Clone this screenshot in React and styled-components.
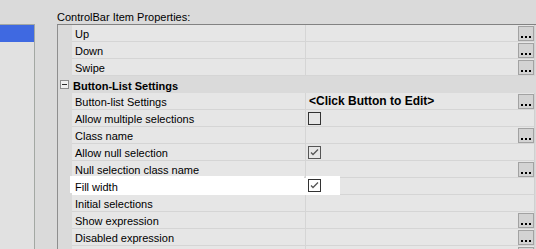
import React from "react";
import styled, { createGlobalStyle } from "styled-components";

const GlobalStyle = createGlobalStyle`
  html, body {
    margin: 0;
    padding: 0;
    background: #dadada;
    overflow: hidden;
  }
  body {
    font-family: "Liberation Sans", Arial, sans-serif;
    font-size: 11px;
    color: #000;
  }
`;

const Page = styled.div`
  display: flex;
  width: 536px;
  height: 249px;
  overflow: hidden;
`;

const SidePanel = styled.div`
  width: 34px;
  margin-top: 24px;
  border-top: 1px solid #a3a8a3;
  border-right: 1px solid #a3a8a3;
  background: #e1e1e1;
  flex-shrink: 0;
`;

const SideSelected = styled.div`
  height: 17px;
  background: #3f69e1;
`;

const Main = styled.div`
  margin-left: 22px;
  display: flex;
  flex-direction: column;
  flex: 1;
`;

const Title = styled.div`
  height: 25px;
  box-sizing: border-box;
  padding-top: 11px;
  line-height: 13px;
  white-space: nowrap;
`;

const Grid = styled.div`
  border-top: 1px solid #828282;
  border-left: 1px solid #8e8e8e;
  display: flex;
  flex-direction: column;
`;

const Row = styled.div`
  display: flex;
  height: 17px;
`;

const MarginCell = styled.div`
  width: 14px;
  flex-shrink: 0;
`;

const NameCell = styled.div`
  width: 230px;
  padding-left: 3px;
  flex-shrink: 0;
  height: 16px;
  line-height: 18px;
  background: ${(p) => (p.$active ? "#ffffff" : "#e6e6e6")};
  border-bottom: 1px solid ${(p) => (p.$active ? "#ffffff" : "#d5d5d5")};
  border-right: 1px solid ${(p) => (p.$active ? "#ffffff" : "#d5d5d5")};
  box-shadow: ${(p) => (p.$active ? "-2px -2px 0 #ffffff" : "none")};
  white-space: nowrap;
  overflow: hidden;
`;

const ValueCell = styled.div`
  width: 228px;
  flex-shrink: 0;
  height: 16px;
  display: flex;
  align-items: center;
  background: #e6e6e6;
  border-bottom: 1px solid #d5d5d5;
  border-right: 1px solid #d0d0d0;
  position: relative;
`;

const ValueText = styled.span`
  font-weight: bold;
  font-size: 12px;
  line-height: 18px;
  padding-left: 3px;
  white-space: nowrap;
  flex: 1;
`;

const Editor = styled.div`
  width: 34px;
  height: 19px;
  margin-top: -2px;
  margin-bottom: -1px;
  background: #ffffff;
  display: flex;
  align-items: center;
`;

const CategoryRow = styled.div`
  display: flex;
  align-items: center;
  height: 17px;
`;

const CategoryText = styled.span`
  font-weight: bold;
  padding-left: 4px;
  padding-top: 2px;
  white-space: nowrap;
`;

const Expander = styled.div`
  width: 7px;
  height: 7px;
  margin-left: 2px;
  border: 1px solid #8c8c8c;
  background: #f0f0f0;
  display: flex;
  align-items: center;
  justify-content: center;
  &::after {
    content: "";
    width: 5px;
    height: 1px;
    background: #2a2a2a;
  }
`;

const CheckBox = styled.div`
  width: 11px;
  height: 11px;
  margin-left: 2px;
  border: 1px solid ${(p) => p.$border || "#333"};
  background: ${(p) => (p.$white ? "#fff" : "transparent")};
  display: flex;
  align-items: center;
  justify-content: center;
`;

const DotsButton = styled.button`
  position: absolute;
  right: 0;
  top: 1px;
  width: 16px;
  height: 15px;
  box-sizing: border-box;
  padding: 0 0 2px 0;
  margin: 0;
  border: 1px solid #a2a2a2;
  background: #d3d3d3;
  display: flex;
  align-items: flex-end;
  justify-content: center;
  gap: 2px;
`;

const Dot = styled.span`
  width: 2px;
  height: 2px;
  background: #000;
`;

const Check = ({ checked, border, white }) => (
  <CheckBox $border={border} $white={white}>
    {checked && (
      <svg width="11" height="11" viewBox="0 0 11 11">
        <polyline
          points="2,5.5 4,7.5 9,2.5"
          fill="none"
          stroke="#555"
          strokeWidth="1.3"
        />
      </svg>
    )}
  </CheckBox>
);

const Dots = () => (
  <DotsButton>
    <Dot />
    <Dot />
    <Dot />
  </DotsButton>
);

const rows = [
  { label: "Up", button: true },
  { label: "Down", button: true },
  { label: "Swipe", button: true },
  { category: "Button-List Settings" },
  { label: "Button-list Settings", value: "<Click Button to Edit>", button: true },
  { label: "Allow multiple selections", check: "off" },
  { label: "Class name", button: true },
  { label: "Allow null selection", check: "on", border: "#555" },
  { label: "Null selection class name", button: true },
  { label: "Fill width", check: "on", active: true },
  { label: "Initial selections" },
  { label: "Show expression", button: true },
  { label: "Disabled expression", button: true },
  { label: "", button: true },
];

const PropertyRow = ({ row }) => {
  if (row.category) {
    return (
      <CategoryRow>
        <Expander />
        <CategoryText>{row.category}</CategoryText>
      </CategoryRow>
    );
  }
  return (
    <Row>
      <MarginCell />
      <NameCell $active={row.active}>{row.label}</NameCell>
      <ValueCell>
        {row.value && <ValueText>{row.value}</ValueText>}
        {row.check &&
          (row.active ? (
            <Editor>
              <Check checked white border="#333" />
            </Editor>
          ) : (
            <Check checked={row.check === "on"} border={row.border} />
          ))}
        {row.button && <Dots />}
      </ValueCell>
    </Row>
  );
};

export default function App() {
  return (
    <>
      <GlobalStyle />
      <Page>
        <SidePanel>
          <SideSelected />
        </SidePanel>
        <Main>
          <Title>ControlBar Item Properties:</Title>
          <Grid>
            {rows.map((row, i) => (
              <PropertyRow key={i} row={row} />
            ))}
          </Grid>
        </Main>
      </Page>
    </>
  );
}
